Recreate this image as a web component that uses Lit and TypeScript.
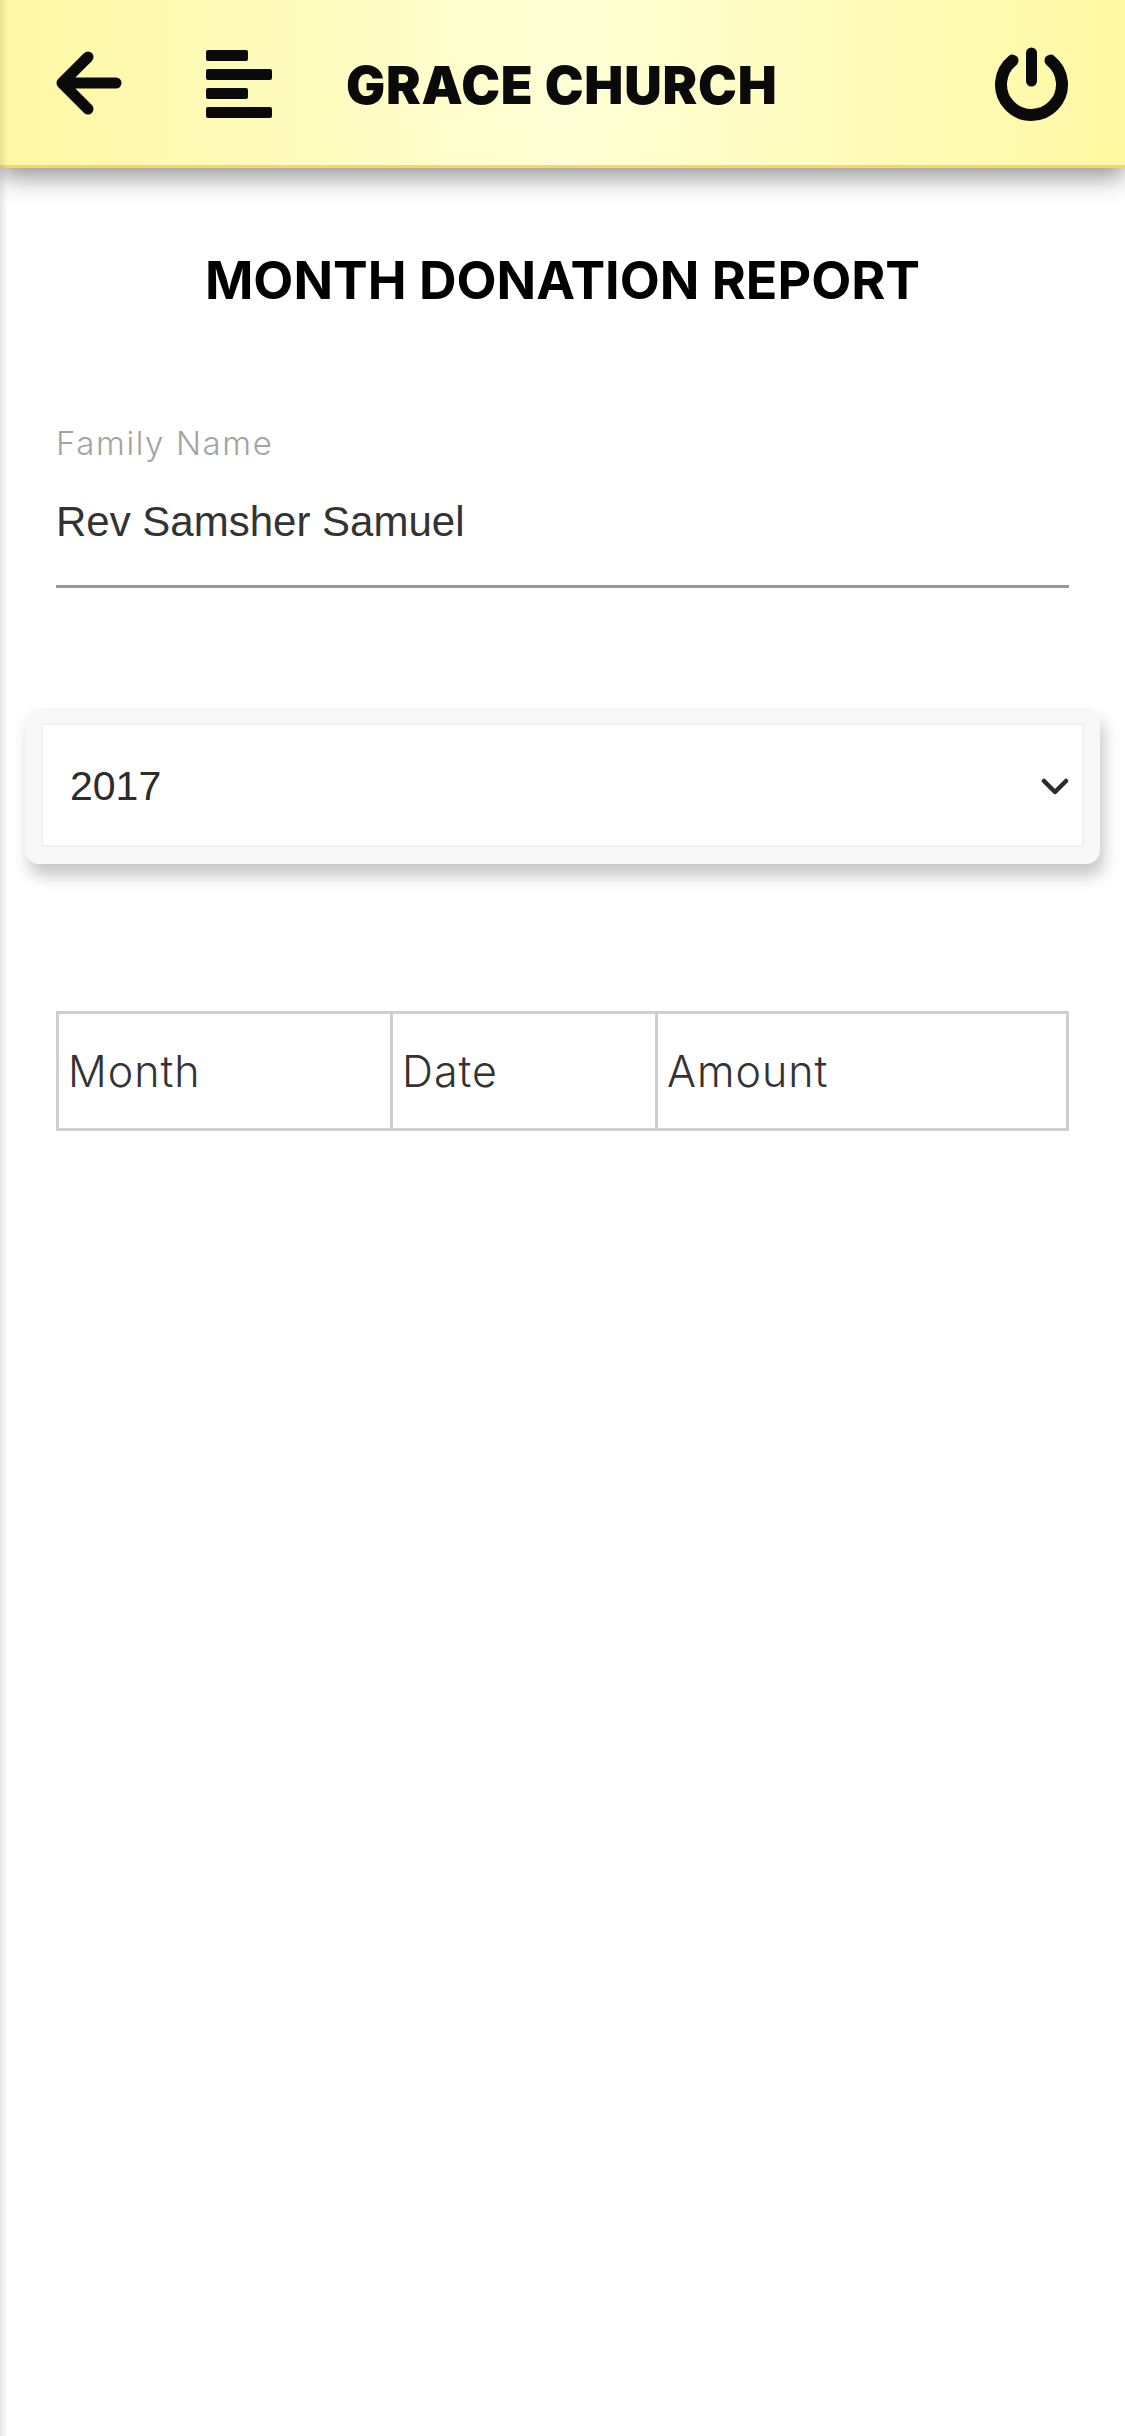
import { LitElement, html, css } from "lit";
import { customElement } from "lit/decorators.js";

@customElement("app-root")
export class AppRoot extends LitElement {
  static styles = css`
    :host {
      display: block;
      width: 1125px;
      height: 2436px;
      background: #fff;
      overflow: hidden;
      position: relative;
      font-family: "Inter", "Liberation Sans", sans-serif;
    }
    .edge {
      position: absolute;
      left: 0;
      top: 0;
      bottom: 0;
      width: 8px;
      z-index: 2;
      background: linear-gradient(90deg, rgba(0, 0, 0, 0.1), rgba(0, 0, 0, 0));
    }
    .bar {
      position: relative;
      height: 165px;
      border-bottom: 3px solid #fbd65f;
      background: linear-gradient(90deg, #fff8a4 0%, #ffffd6 50%, #fff9a4 100%);
      box-shadow: 0 8px 24px rgba(0, 0, 0, 0.45);
      display: flex;
      align-items: center;
      padding: 0 56px 0 56px;
    }
    .back { width: 66px; height: 64px; margin-right: 84px; }
    .menu { width: 66px; height: 68px; margin-right: 74px; margin-top: 3px; }
    .power { width: 74px; height: 74px; margin-left: auto; margin-top: 2px; }
    svg { display: block; }
    .brand {
      font-size: 52px;
      font-weight: 900;
      letter-spacing: 0.8px;
      color: #0a0a0a;
      white-space: nowrap;
      margin-top: 5px;
    }
    .title {
      margin: 83px 0 0;
      text-align: center;
      font-size: 52px;
      line-height: 60px;
      font-weight: 700;
      color: #000;
    }
    .field { margin: 112px 56px 0 56px; border-bottom: 3px solid #999; height: 162px; }
    .label {
      font-size: 33px;
      line-height: 40px;
      letter-spacing: 1.6px;
      color: #a3a3a3;
      font-weight: 300;
    }
    .value {
      margin-top: 35px;
      font-family: "Liberation Sans", sans-serif;
      font-size: 42px;
      line-height: 48px;
      color: #333;
    }
    .card {
      margin: 120px 25px 0 25px;
      height: 156px;
      padding: 15px 16px;
      box-sizing: border-box;
      background: #f8f8f8;
      border-radius: 14px;
      box-shadow: 4px 12px 16px rgba(0, 0, 0, 0.22);
    }
    .select {
      height: 124px;
      box-sizing: border-box;
      background: #fff;
      border: 2px solid #f1f1f1;
      display: flex;
      align-items: center;
      justify-content: space-between;
      padding: 2px 13px 0 27px;
      font-family: "Liberation Sans", sans-serif;
      font-size: 41px;
      color: #2c2c2c;
    }
    .chev { width: 28px; height: 20px; margin-top: 2px; }
    table {
      margin: 147px 56px 0 56px;
      width: 1013px;
      border-collapse: collapse;
      table-layout: fixed;
      font-size: 43px;
      letter-spacing: 1px;
      font-weight: 300;
      color: #333;
    }
    td {
      border: 3px solid #cfcfcf;
      height: 117px;
      padding: 0 0 0 9px;
      box-sizing: border-box;
    }
  `;

  render() {
    return html`
      <div class="edge"></div>
      <div class="bar">
        <svg class="back" viewBox="0 0 66 64" fill="none" stroke="#0a0a0a" stroke-width="11" stroke-linecap="round" stroke-linejoin="round">
          <path d="M60 32H6M32 6L6 32L32 58" />
        </svg>
        <svg class="menu" viewBox="0 0 66 68" fill="#0a0a0a">
          <rect x="0" y="0" width="42" height="11" rx="2" />
          <rect x="0" y="19" width="66" height="11" rx="2" />
          <rect x="0" y="38" width="42" height="11" rx="2" />
          <rect x="0" y="57" width="66" height="11" rx="2" />
        </svg>
        <div class="brand">GRACE CHURCH</div>
        <svg class="power" viewBox="0 0 74 74" fill="none" stroke="#0a0a0a" stroke-width="12" stroke-linecap="round">
          <path d="M17.5 13.6A30.5 30.5 0 1 0 55.5 13.6" />
          <path d="M36.5 6V34" stroke-width="11" />
        </svg>
      </div>
      <h1 class="title">MONTH DONATION REPORT</h1>
      <div class="field">
        <div class="label">Family Name</div>
        <div class="value">Rev Samsher Samuel</div>
      </div>
      <div class="card">
        <div class="select">
          <span>2017</span>
          <svg class="chev" viewBox="0 0 28 20" fill="none" stroke="#2c2c2c" stroke-width="4.5" stroke-linecap="round" stroke-linejoin="round">
            <path d="M3 4L14 15L25 4" />
          </svg>
        </div>
      </div>
      <table>
        <colgroup><col style="width:334px" /><col style="width:265px" /><col /></colgroup>
        <tr><td>Month</td><td>Date</td><td>Amount</td></tr>
      </table>
    `;
  }
}
